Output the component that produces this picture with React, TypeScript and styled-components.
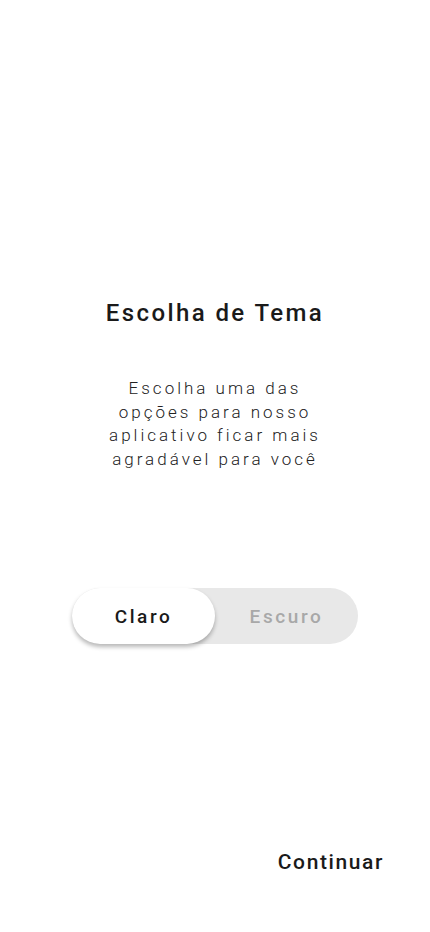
import React, { useState } from "react";
import styled, { createGlobalStyle } from "styled-components";

const GlobalStyle = createGlobalStyle`
  html, body {
    margin: 0;
    padding: 0;
    background: #ffffff;
    font-family: Roboto, "Liberation Sans", sans-serif;
  }
`;

const Screen = styled.main`
  display: flex;
  flex-direction: column;
  align-items: center;
  width: 430px;
  min-height: 932px;
  padding-top: 297px;
  box-sizing: border-box;
`;

const Title = styled.h1`
  margin: 0;
  font-size: 24px;
  line-height: 32px;
  font-weight: 500;
  letter-spacing: 2.4px;
  color: #1a1a1a;
`;

const Description = styled.p`
  margin: 48px 0 0;
  width: 230px;
  text-align: center;
  font-size: 17px;
  line-height: 23.5px;
  font-weight: 300;
  letter-spacing: 3px;
  color: #222222;
`;

const Track = styled.div`
  display: grid;
  grid-template-columns: 1fr 1fr;
  width: 286px;
  height: 56px;
  margin-top: 117px;
  border-radius: 28px;
  background: #e8e8e8;
`;

const Option = styled.button<{ $active: boolean }>`
  border: none;
  border-radius: 28px;
  background: ${(p) => (p.$active ? "#ffffff" : "transparent")};
  box-shadow: ${(p) => (p.$active ? "0 3px 4px rgba(0, 0, 0, 0.28)" : "none")};
  font-family: inherit;
  font-size: 19px;
  font-weight: 500;
  letter-spacing: 2.6px;
  color: ${(p) => (p.$active ? "#1a1a1a" : "#a8a8a8")};
  cursor: pointer;
`;

const Footer = styled.div`
  display: flex;
  justify-content: flex-end;
  align-self: stretch;
  margin-top: 206px;
  padding-right: 46px;
`;

const ContinueButton = styled.button`
  border: none;
  background: none;
  padding: 0;
  font-family: inherit;
  font-size: 21px;
  line-height: 24px;
  font-weight: 500;
  letter-spacing: 1.6px;
  color: #1a1a1a;
  cursor: pointer;
`;

const themes = ["Claro", "Escuro"];

export default function App() {
  const [theme, setTheme] = useState("Claro");

  return (
    <>
      <GlobalStyle />
      <Screen>
        <Title>Escolha de Tema</Title>
        <Description>
          Escolha uma das opções para nosso aplicativo ficar mais agradável
          para você
        </Description>
        <Track>
          {themes.map((t) => (
            <Option key={t} $active={theme === t} onClick={() => setTheme(t)}>
              {t}
            </Option>
          ))}
        </Track>
        <Footer>
          <ContinueButton>Continuar</ContinueButton>
        </Footer>
      </Screen>
    </>
  );
}
